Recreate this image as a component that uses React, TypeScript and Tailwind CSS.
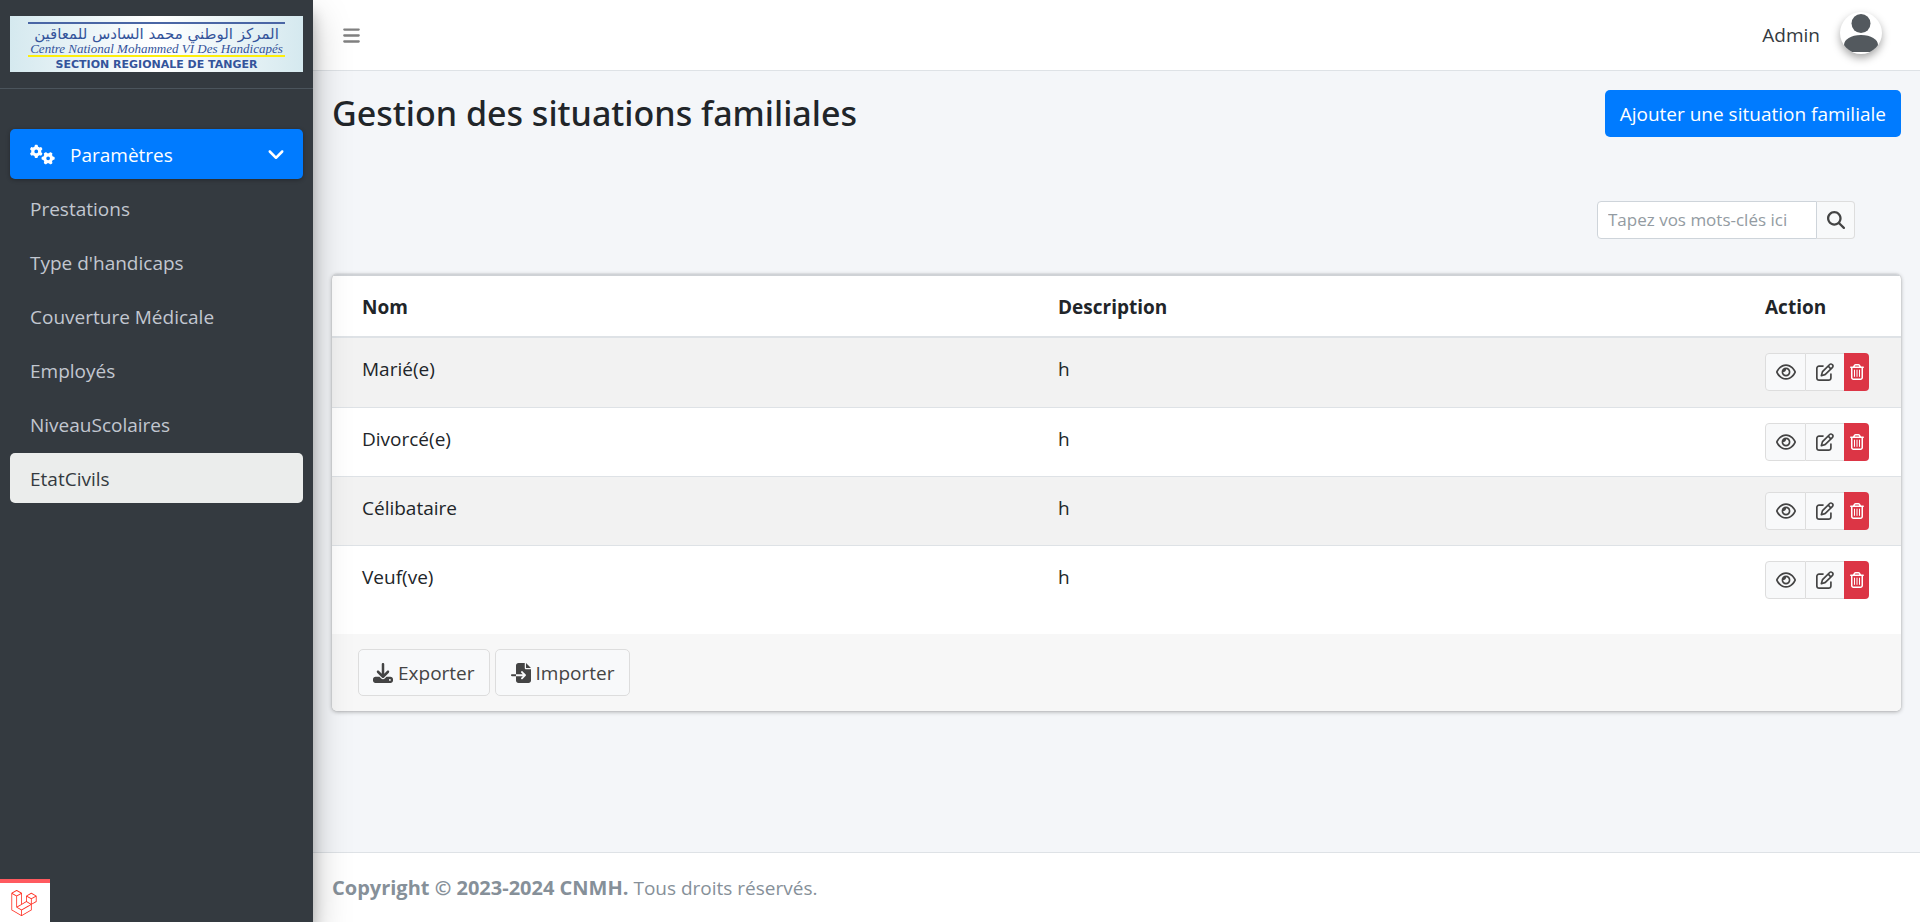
import React from "react";
import {
  FaAngleDown,
  FaBars,
  FaDownload,
  FaFileImport,
  FaGears,
  FaLaravel,
  FaMagnifyingGlass,
  FaRegEye,
  FaRegPenToSquare,
  FaRegTrashCan,
} from "react-icons/fa6";

const links = [
  "Prestations",
  "Type d'handicaps",
  "Couverture Médicale",
  "Employés",
  "NiveauScolaires",
  "EtatCivils",
];

const rows = [
  { nom: "Marié(e)", description: "h" },
  { nom: "Divorcé(e)", description: "h" },
  { nom: "Célibataire", description: "h" },
  { nom: "Veuf(ve)", description: "h" },
];

function Logo() {
  return (
    <a
      href="#"
      className="flex h-14 flex-col bg-[linear-gradient(90deg,#d5e9ef,#ffffff_50%,#d5e9ef)] px-[18px] pt-[6px] text-center text-[#34549b]"
    >
      <span className="h-[2px] shrink-0 bg-[#4a66a5]" />
      <span
        dir="rtl"
        lang="ar"
        className="h-5 shrink-0 whitespace-nowrap font-['DejaVu_Sans',sans-serif] text-[15px] leading-5"
      >
        المركز الوطني محمد السادس للمعاقين
      </span>
      <span className="h-[10px] shrink-0 whitespace-nowrap font-['Liberation_Serif',serif] text-[13px] italic leading-[10px]">
        Centre National Mohammed VI Des Handicapés
      </span>
      <span className="mt-px h-[2px] shrink-0 bg-[#fdee0b]" />
      <span className="shrink-0 whitespace-nowrap pt-[2px] font-['DejaVu_Sans',sans-serif] text-[11px] font-bold leading-3">
        SECTION REGIONALE DE TANGER
      </span>
    </a>
  );
}

function Sidebar() {
  return (
    <aside className="z-10 flex w-[313px] shrink-0 flex-col bg-[#343a40] shadow-[0_18px_35px_rgba(0,0,0,0.25),0_13px_13px_rgba(0,0,0,0.22)]">
      <div className="border-b border-[#4b545c] px-[10px] py-4">
        <Logo />
      </div>
      <nav className="mt-10 flex flex-col gap-1 px-[10px]">
        <a
          href="#"
          className="flex h-[50px] items-center rounded-[5px] bg-[#007bff] pl-5 pr-[17px] text-white shadow-[0_1px_4px_rgba(0,0,0,0.3)]"
        >
          <FaGears className="size-[25px]" />
          <span className="ml-[15px] flex-1 pt-[2px]">Paramètres</span>
          <FaAngleDown className="size-5" />
        </a>
        {links.map((link) => (
          <a
            key={link}
            href="#"
            className={
              link === "EtatCivils"
                ? "flex h-[50px] items-center rounded-[5px] bg-[#ebedec] px-5 pt-[2px] text-[#343a40]"
                : "flex h-[50px] items-center rounded-[5px] px-5 pt-[2px] text-[#c2c7d0]"
            }
          >
            {link}
          </a>
        ))}
      </nav>
    </aside>
  );
}

function Topbar() {
  return (
    <header className="flex h-[71px] items-center justify-between border-b border-[#dee2e6] bg-white pl-[29px] pr-[38px]">
      <button type="button" aria-label="Menu" className="text-[#808080]">
        <FaBars className="size-[19px]" />
      </button>
      <div className="flex items-center gap-5 text-[#343a40]">
        <span>Admin</span>
        <span className="mb-1 size-[42px] overflow-hidden rounded-full bg-white shadow-[0_4px_8px_rgba(0,0,0,0.35)]">
          <svg viewBox="0 0 42 42" className="size-full" fill="#53595e">
            <circle cx="21" cy="11.500" r="9.500" />
            <path d="M4 33C4 27.500 11 23 21 23s17 4.500 17 10c0 2-2.500 5-5.500 7h-23C6.500 38 4 35 4 33Z" />
          </svg>
        </span>
      </div>
    </header>
  );
}

function Actions() {
  return (
    <div className="flex h-[38px] w-[104px]">
      <button
        type="button"
        aria-label="Voir"
        className="flex w-[41px] items-center justify-center rounded-l border border-[#dddddd] bg-[#f8f9fa] text-[#444444]"
      >
        <FaRegEye className="size-5" />
      </button>
      <button
        type="button"
        aria-label="Modifier"
        className="flex w-[38px] items-center justify-center border-y border-[#dddddd] bg-[#f8f9fa] text-[#444444]"
      >
        <FaRegPenToSquare className="size-[18px]" />
      </button>
      <button
        type="button"
        aria-label="Supprimer"
        className="flex w-[25px] items-center justify-center rounded-r bg-[#dc3545] text-white"
      >
        <FaRegTrashCan className="size-4" />
      </button>
    </div>
  );
}

function SituationsCard() {
  return (
    <section className="overflow-hidden rounded-[5px] bg-white shadow-[0_0_1px_rgba(0,0,0,0.25),0_1px_4px_rgba(0,0,0,0.3)]">
      <table className="mb-5 w-full table-fixed border-separate border-spacing-0 border-t-2 border-[#cfd2d6] text-left">
        <thead>
          <tr className="font-bold">
            <th className="w-[711px] border-b-2 border-[#dee2e6] pb-[14px] pl-[30px] pr-4 pt-4">Nom</th>
            <th className="border-b-2 border-[#dee2e6] px-[15px] pb-[14px] pt-4">Description</th>
            <th className="w-[151px] border-b-2 border-[#dee2e6] px-[15px] pb-[14px] pt-4">Action</th>
          </tr>
        </thead>
        <tbody>
          {rows.map((row) => (
            <tr key={row.nom} className="group h-[69px] align-top odd:bg-[#f2f2f2]">
              <td className="border-t border-[#dee2e6] pb-[14px] pl-[30px] pr-4 pt-4 group-first:border-t-0">
                {row.nom}
              </td>
              <td className="border-t border-[#dee2e6] px-[15px] pb-[14px] pt-4 group-first:border-t-0">
                {row.description}
              </td>
              <td className="border-t border-[#dee2e6] p-[15px] group-first:border-t-0">
                <Actions />
              </td>
            </tr>
          ))}
        </tbody>
      </table>
      <div className="flex gap-[5px] bg-[#f7f7f7] px-[26px] py-[15px]">
        <button
          type="button"
          className="flex h-[47px] items-center gap-[5px] rounded-[5px] border border-[#dddddd] bg-[#f8f9fa] px-[14px] text-[#444444]"
        >
          <FaDownload className="size-5" />
          Exporter
        </button>
        <button
          type="button"
          className="flex h-[47px] items-center gap-[5px] rounded-[5px] border border-[#dddddd] bg-[#f8f9fa] px-[15px] text-[#444444]"
        >
          <FaFileImport className="size-5" />
          Importer
        </button>
      </div>
    </section>
  );
}

export default function App() {
  return (
    <div className="flex min-h-screen bg-[#f4f6f9] font-['Open_Sans','Noto_Sans',sans-serif] text-[19px] leading-[30px] text-[#212529]">
      <Sidebar />
      <div className="flex min-w-0 flex-1 flex-col">
        <Topbar />
        <main className="flex-1 px-[19px] pb-5 pt-[19px]">
          <div className="flex items-center justify-between">
            <h1 className="font-['Noto_Sans',sans-serif] text-[34px] font-medium leading-[45px]">
              Gestion des situations familiales
            </h1>
            <button type="button" className="h-[47px] rounded-[5px] bg-[#007bff] px-[15px] text-white">
              Ajouter une situation familiale
            </button>
          </div>
          <form className="mb-[35px] mr-[46px] mt-16 flex h-[38px] justify-end">
            <input
              type="text"
              aria-label="Rechercher"
              placeholder="Tapez vos mots-clés ici"
              className="w-[220px] rounded-l border border-[#ced4da] bg-white px-[10px] text-[17px] placeholder:text-[#939ba2]"
            />
            <button
              type="button"
              aria-label="Lancer la recherche"
              className="flex w-[38px] items-center justify-center rounded-r border border-l-0 border-[#dddddd] bg-[#f8f9fa] text-[#444444]"
            >
              <FaMagnifyingGlass className="size-[18px]" />
            </button>
          </form>
          <SituationsCard />
        </main>
        <footer className="border-t border-[#dee2e6] bg-white px-[19px] pb-[19px] pt-5 text-[#869099]">
          <strong className="text-[20px]">Copyright © 2023-2024 CNMH.</strong> Tous droits réservés.
        </footer>
      </div>
      <a
        href="#"
        aria-label="Laravel"
        className="fixed bottom-0 left-0 z-20 flex h-[43px] w-[50px] items-center justify-center border-t-4 border-[#ff5a5f] bg-white pr-[2px] text-[#ff2d20]"
      >
        <FaLaravel className="size-[26px]" />
      </a>
    </div>
  );
}
